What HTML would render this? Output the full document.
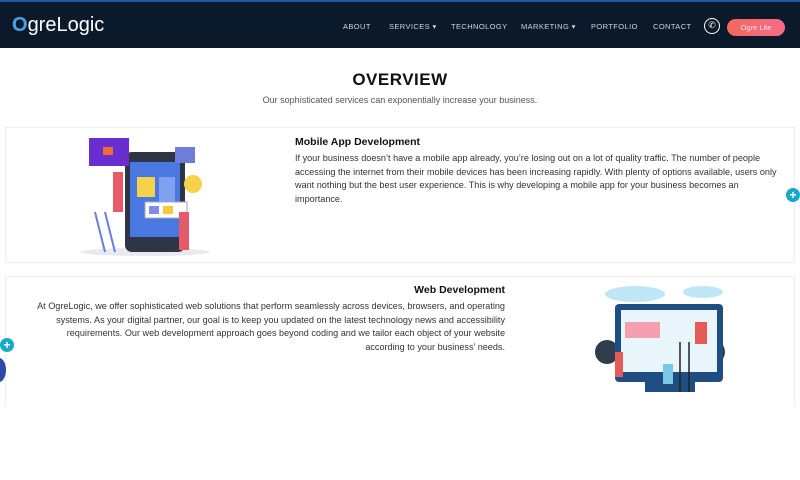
<!DOCTYPE html>
<html><head><style>
*{margin:0;padding:0;box-sizing:border-box}
body{width:800px;height:480px;background:#fff;font-family:"Liberation Sans",sans-serif;position:relative;overflow:hidden}
.hdr{position:absolute;left:0;top:0;width:800px;height:48px;background:#0b1a2b;border-top:2px solid #1d5aa3}
.logo{position:absolute;left:12px;top:12px;color:#fff;font-size:20px;font-weight:normal;letter-spacing:0}
.nav{position:absolute;top:20px;color:#cfd4da;font-size:7.5px;letter-spacing:0.4px}
.ph{position:absolute;left:704px;top:16px;width:16px;height:16px;border:1.5px solid #fff;border-radius:50%;color:#fff;font-size:9px;text-align:center;line-height:13px}
.btn{position:absolute;left:727px;top:17px;width:58px;height:17px;border-radius:9px;background:linear-gradient(90deg,#f4685a,#f76b8a);color:#fde;font-size:7.5px;text-align:center;line-height:17px}
h1{position:absolute;top:70px;left:0;width:800px;text-align:center;font-size:17px;font-weight:900;color:#111;letter-spacing:0.5px}
.sub{position:absolute;top:95px;left:0;width:800px;text-align:center;font-size:9px;color:#555}
.card{position:absolute;left:5px;width:790px;border:1px solid #eee;background:#fff}
.t{position:absolute;font-size:10.5px;font-weight:bold;color:#111}
.p{position:absolute;font-size:9.1px;line-height:13.6px;color:#333}
.plus{position:absolute;width:14px;height:14px;border-radius:50%;background:#18a9c9;color:#fff;font-size:12px;font-weight:bold;text-align:center;line-height:14px}
</style></head><body>
<div class="hdr">
<div class="logo"><span style="color:#4aa3e8;font-weight:bold">O</span>greLogic</div>
<div class="nav" style="left:343px">ABOUT</div>
<div class="nav" style="left:389px">SERVICES ▾</div>
<div class="nav" style="left:451px">TECHNOLOGY</div>
<div class="nav" style="left:521px">MARKETING ▾</div>
<div class="nav" style="left:591px">PORTFOLIO</div>
<div class="nav" style="left:653px">CONTACT</div>
<div class="ph">✆</div>
<div class="btn">Ogre Lite</div>
</div>
<h1>OVERVIEW</h1>
<div class="sub">Our sophisticated services can exponentially increase your business.</div>

<div class="card" style="top:127px;height:136px"></div>
<svg style="position:absolute;left:75px;top:132px" width="150" height="125">
<ellipse cx="70" cy="120" rx="65" ry="4" fill="#e8eaf0"/>
<circle cx="80" cy="50" r="30" fill="#eef0f4"/>
<rect x="50" y="20" width="60" height="100" rx="7" fill="#2f3545"/>
<rect x="55" y="30" width="50" height="75" fill="#4a78e0"/>
<rect x="62" y="45" width="18" height="20" fill="#f6d24a"/>
<rect x="84" y="45" width="16" height="30" fill="#7fa0f0"/>
<rect x="14" y="6" width="40" height="28" fill="#6a2ed0"/>
<rect x="28" y="15" width="10" height="8" fill="#f06a3a"/>
<rect x="70" y="70" width="42" height="16" fill="#fff" stroke="#aab" />
<rect x="74" y="74" width="10" height="8" fill="#7c8ee8"/><rect x="88" y="74" width="10" height="8" fill="#f6c83a"/>
<rect x="100" y="15" width="20" height="16" fill="#6c7ed8"/>
<circle cx="118" cy="52" r="9" fill="#f6d24a"/>
<path d="M20 80 L30 120 M30 80 L40 120" stroke="#6a7ee0" stroke-width="2"/>
<rect x="38" y="40" width="10" height="40" fill="#e75a6a"/>
<rect x="104" y="80" width="10" height="38" fill="#e75a6a"/>
</svg>
<div class="t" style="left:295px;top:136px">Mobile App Development</div>
<div class="p" style="left:295px;top:152px;width:482px">If your business doesn’t have a mobile app already, you’re losing out on a lot of quality traffic. The number of people accessing the internet from their mobile devices has been increasing rapidly. With plenty of options available, users only want nothing but the best user experience. This is why developing a mobile app for your business becomes an importance.</div>
<div class="plus" style="left:786px;top:188px">+</div>

<div class="card" style="top:276px;height:130px;border-bottom:none"></div>
<div class="t" style="left:0;width:505px;text-align:right;top:284px">Web Development</div>
<div class="p" style="left:37px;top:300px;width:468px;text-align:right">At OgreLogic, we offer sophisticated web solutions that perform seamlessly across devices, browsers, and operating systems. As your digital partner, our goal is to keep you updated on the latest technology news and accessibility requirements. Our web development approach goes beyond coding and we tailor each object of your website according to your business’ needs.</div>
<svg style="position:absolute;left:585px;top:282px" width="145" height="115">
<ellipse cx="50" cy="12" rx="30" ry="8" fill="#bfe6f5"/><ellipse cx="118" cy="10" rx="20" ry="6" fill="#bfe6f5"/>
<circle cx="22" cy="70" r="12" fill="#2e3c4e"/><circle cx="128" cy="70" r="12" fill="#2e3c4e"/>
<rect x="30" y="22" width="108" height="78" rx="4" fill="#1f4f82"/>
<rect x="36" y="28" width="96" height="62" fill="#e8f6fb"/>
<rect x="40" y="40" width="35" height="16" fill="#f5a0b0"/>
<rect x="60" y="100" width="50" height="10" fill="#1f4f82"/>
<rect x="110" y="40" width="12" height="22" fill="#e75a5a"/>
<rect x="30" y="70" width="8" height="25" fill="#e75a5a"/>
<rect x="78" y="82" width="10" height="20" fill="#7ac7e6"/>
<path d="M95 60 V110 M104 60 V110" stroke="#222" stroke-width="1.5"/>
</svg>
<div class="plus" style="left:0;top:338px">+</div>
<div style="position:absolute;left:-8px;top:358px;width:14px;height:24px;border-radius:50%;background:#2d4aa8"></div>
</body></html>
